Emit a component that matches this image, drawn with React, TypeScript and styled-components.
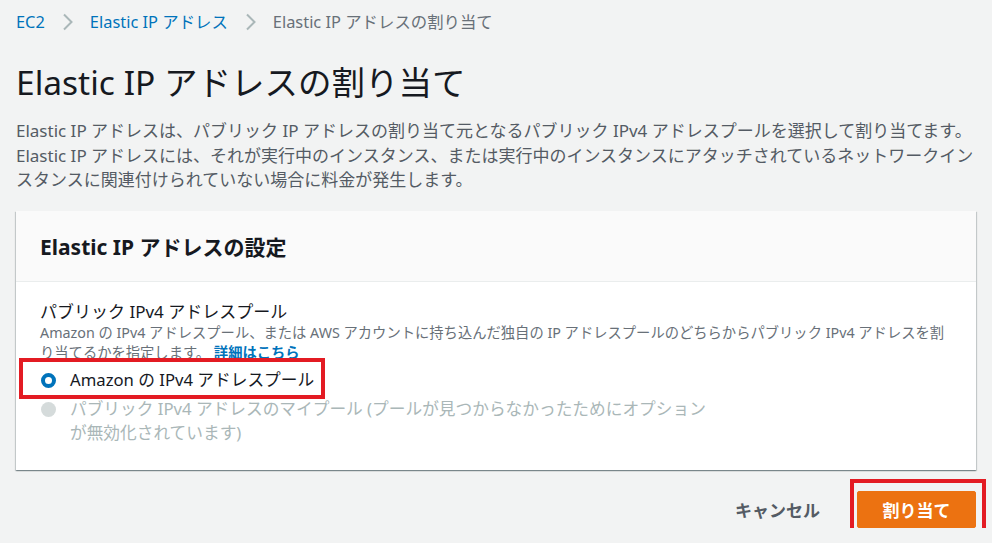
import styled, { createGlobalStyle } from "styled-components";

const GlobalStyle = createGlobalStyle`
  html, body {
    margin: 0;
    padding: 0;
    background-color: #f2f3f3;
  }
  body {
    font-family: "Noto Sans", "Noto Sans CJK JP", sans-serif;
    color: #16191f;
  }
`;

const descLines = [
  "Elastic IP アドレスは、パブリック IP アドレスの割り当て元となるパブリック IPv4 アドレスプールを選択して割り当てます。",
  "Elastic IP アドレスには、それが実行中のインスタンス、または実行中のインスタンスにアタッチされているネットワークイン",
  "スタンスに関連付けられていない場合に料金が発生します。",
];

export default function App() {
  return (
    <>
      <GlobalStyle />
      <Page>
        <Breadcrumbs>
          <CrumbLink>EC2</CrumbLink>
          <Chevron />
          <CrumbLink>Elastic IP アドレス</CrumbLink>
          <Chevron />
          <CrumbCurrent>Elastic IP アドレスの割り当て</CrumbCurrent>
        </Breadcrumbs>

        <Title>Elastic IP アドレスの割り当て</Title>
        <Description>
          {descLines.map((line) => (
            <DescLine key={line}>{line}</DescLine>
          ))}
        </Description>

        <Card>
          <CardHeader>
            <CardTitle>Elastic IP アドレスの設定</CardTitle>
          </CardHeader>
          <CardBody>
            <FieldLabel>パブリック IPv4 アドレスプール</FieldLabel>
            <FieldHint>
              <HintLine>
                Amazon の IPv4 アドレスプール、または AWS アカウントに持ち込んだ独自の IP アドレスプールのどちらからパブリック IPv4 アドレスを割
              </HintLine>
              <HintLine>
                り当てるかを指定します。 <InfoLink>詳細はこちら</InfoLink>
              </HintLine>
            </FieldHint>

            <RadioGroup>
              <Highlight>
                <RadioRow>
                  <RadioDot checked />
                  <RadioText>Amazon の IPv4 アドレスプール</RadioText>
                </RadioRow>
              </Highlight>
              <RadioRow disabled>
                <RadioDot disabled />
                <RadioText disabled>
                  パブリック IPv4 アドレスのマイプール (プールが見つからなかったためにオプション
                  <br />
                  が無効化されています)
                </RadioText>
              </RadioRow>
            </RadioGroup>
          </CardBody>
        </Card>

        <Footer>
          <CancelBtn>キャンセル</CancelBtn>
          <ButtonHighlight>
            <PrimaryBtn>割り当て</PrimaryBtn>
          </ButtonHighlight>
        </Footer>
      </Page>
    </>
  );
}

function Chevron() {
  return (
    <ChevronIcon width="12" height="18" viewBox="0 0 12 18">
      <path d="M2 1.5 L9.5 9 L2 16.5" fill="none" stroke="#aab7b8" strokeWidth="2" />
    </ChevronIcon>
  );
}

const Page = styled.div`
  padding: 12px 16px 0 16px;
`;

const Breadcrumbs = styled.nav`
  display: flex;
  align-items: center;
  height: 20px;
  font-size: 16.4px;
  line-height: 20px;
`;

const CrumbLink = styled.span`
  color: #0073bb;
`;

const CrumbCurrent = styled.span`
  color: #687078;
`;

const ChevronIcon = styled.svg`
  margin: 0 16px 0 17px;
`;

const Title = styled.h1`
  margin: 30px 0 0 0;
  font-size: 33.5px;
  line-height: 40px;
  font-weight: 400;
  color: #16191f;
`;

const Description = styled.div`
  margin-top: 17px;
  color: #545b64;
  font-size: 17px;
  line-height: 24.5px;
`;

const DescLine = styled.div`
  white-space: nowrap;
`;

const Card = styled.section`
  margin-top: 18px;
  background-color: #ffffff;
  box-shadow: 0 1px 1px 0 rgba(0, 28, 36, 0.3), 1px 1px 1px 0 rgba(0, 28, 36, 0.15),
    -1px 1px 1px 0 rgba(0, 28, 36, 0.15);
`;

const CardHeader = styled.header`
  height: 70px;
  display: flex;
  align-items: center;
  padding: 0 24px;
  background-color: #fafafa;
  border-bottom: 1px solid #eaeded;
`;

const CardTitle = styled.h2`
  margin: 0;
  font-size: 21px;
  font-weight: 700;
  color: #16191f;
`;

const CardBody = styled.div`
  padding: 19px 24px 25px 24px;
`;

const FieldLabel = styled.div`
  font-size: 17px;
  line-height: 22px;
  color: #16191f;
`;

const FieldHint = styled.div`
  font-size: 14.3px;
  line-height: 20px;
  color: #687078;
`;

const HintLine = styled.div`
  white-space: nowrap;
`;

const InfoLink = styled.span`
  color: #0073bb;
  font-weight: 700;
`;

const RadioGroup = styled.div`
  margin-top: 5px;
  display: flex;
  flex-direction: column;
  gap: 5px;
`;

const Highlight = styled.div`
  position: relative;

  &::after {
    content: "";
    position: absolute;
    left: -21px;
    right: 627px;
    top: -10px;
    bottom: -7px;
    border: 4px solid #e31b23;
    pointer-events: none;
  }
`;

const RadioRow = styled.label<{ disabled?: boolean }>`
  display: flex;
  align-items: flex-start;
  gap: 14px;
  font-size: 16.7px;
  line-height: 24px;
  cursor: ${(p) => (p.disabled ? "default" : "pointer")};
`;

const RadioDot = styled.span<{ checked?: boolean; disabled?: boolean }>`
  flex: none;
  box-sizing: border-box;
  width: 15px;
  height: 15px;
  margin-top: 5px;
  margin-left: 1px;
  border-radius: 50%;
  background-color: ${(p) => (p.disabled ? "#d5dbdb" : "#ffffff")};
  border: ${(p) => (p.checked ? "4.5px solid #0073bb" : p.disabled ? "none" : "2px solid #aab7b8")};
`;

const RadioText = styled.span<{ disabled?: boolean }>`
  color: ${(p) => (p.disabled ? "#aab7b8" : "#16191f")};
`;

const Footer = styled.div`
  margin-top: 21px;
  display: flex;
  justify-content: flex-end;
  align-items: center;
  gap: 37px;
`;

const CancelBtn = styled.button`
  border: none;
  background: transparent;
  padding: 0;
  font-family: inherit;
  font-size: 17px;
  font-weight: 700;
  color: #545b64;
  cursor: pointer;
`;

const ButtonHighlight = styled.div`
  position: relative;

  &::after {
    content: "";
    position: absolute;
    left: -7px;
    right: -10px;
    top: -12px;
    bottom: -11px;
    border: 4px solid #e31b23;
    pointer-events: none;
  }
`;

const PrimaryBtn = styled.button`
  display: block;
  width: 119px;
  height: 37px;
  border: 1px solid #ec7211;
  border-radius: 2px;
  background-color: #ec7211;
  color: #ffffff;
  font-family: inherit;
  font-size: 17px;
  font-weight: 700;
  cursor: pointer;
`;
